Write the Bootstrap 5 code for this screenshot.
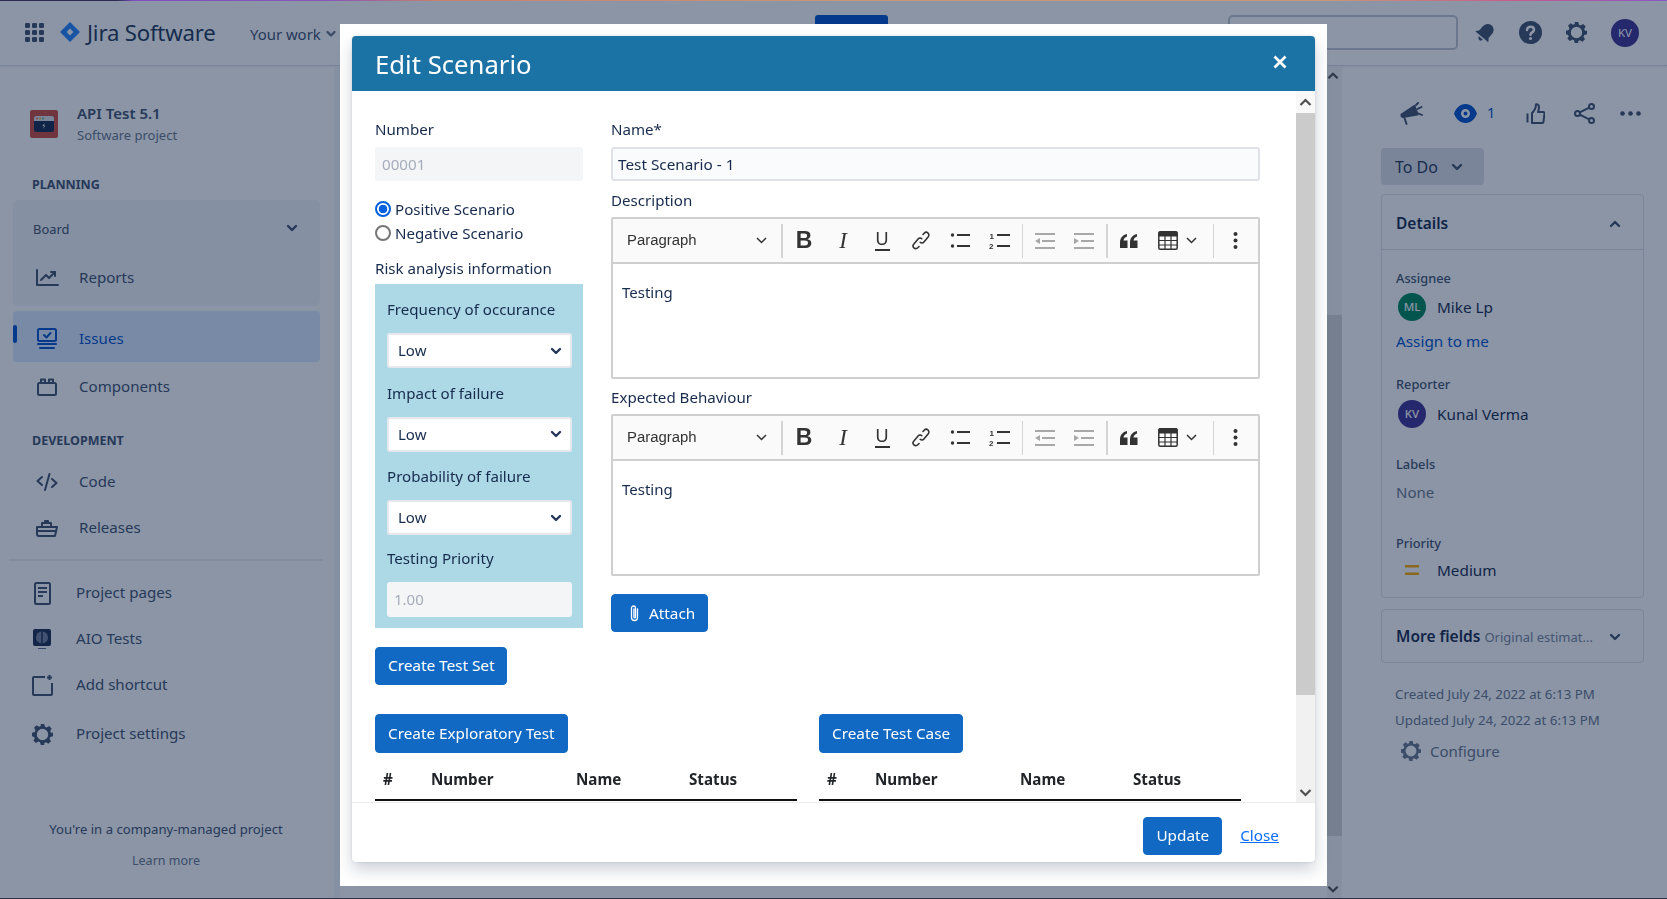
<!DOCTYPE html>
<html lang="en">
<head>
<meta charset="utf-8">
<title>Edit Scenario</title>
<link href="https://cdn.jsdelivr.net/npm/bootstrap@5.3.0/dist/css/bootstrap.min.css" rel="stylesheet">
<style>
html,body{height:100%;overflow:hidden}
body{font-family:"Noto Sans","Open Sans",sans-serif;font-size:15px;color:#172b4d;background:#fff}
.top-grad{position:absolute;left:0;top:0;right:0;height:1px;z-index:1100;background:linear-gradient(90deg,#2a2a55 0,#2a2a55 7%,#7d4fc4 8%,#8a55b8 20%,#c77f6e 26%,#c99577 50%,#c99577 80%,#c55a8c 91%,#8a55c8 100%)}
.bot-line{position:absolute;left:0;right:0;bottom:0;height:1px;z-index:1100;background:#2d3340}
.app-nav{height:66px;flex:none;border-bottom:1px solid #d8dbe2;box-shadow:0 1px 2px rgba(9,30,66,.06)}
.app-nav>*{flex:none}
.brand-wrap{width:250px;padding-left:25px}
.brand-name{font-size:22.2px;color:#253858;margin-left:7px;letter-spacing:-.2px;font-weight:400}
.your-work{width:565px;color:#42526e;font-size:14.9px;margin-top:3px}
.create-stub{width:73px;height:32px;background:#0052cc;border-radius:3px;margin-top:-3px}
.search-stub{width:230px;height:35px;border:2px solid #c1c7d0;border-radius:5px;margin-left:340px;margin-top:-1px}
.nav-ico{flex:none;display:block}
.side{width:340px;flex:none;border-right:6px solid #f4f5f7;display:flex;flex-direction:column}
.proj-block{margin-top:36px;padding-left:30px;height:44px;gap:19px}
.proj-name{font-size:15px;font-weight:600;line-height:22px;color:#42526e}
.proj-sub{font-size:13px;line-height:22px;color:#6b778c}
.side-head{font-size:12.5px;font-weight:700;line-height:18px;padding-left:32px;color:#42526e}
.side-group{margin:6px 14px 0 13px;height:106px;background:#f4f5f7;border-radius:6px}
.board-row{height:55px;padding:5px 22px 0 20px;font-size:12.9px;color:#42526e}
.side-row{display:flex;align-items:center;height:46px;padding-left:22px;padding-bottom:2px;gap:20px;font-size:15.1px;color:#42526e;margin:0 14px 0 13px;position:relative}
.side-row.in-group{margin:0}
.side-row.lower{padding-left:17px;gap:22px}
.side-row .ico-box{width:24px;display:flex;justify-content:center;flex:none;margin-top:2px}
.issues-on{height:51px;background:#deebff;color:#0052cc;border-radius:4px;margin-top:5px;padding-bottom:0;padding-top:3px}
.issues-on .ico-box{margin-top:0}
.issues-bar{position:absolute;left:0;top:14px;width:4px;height:18px;background:#0052cc;border-radius:2px}
.side-rule{height:2px;background:#ebecf0;margin:8px 11px 0 9px}
.side-foot{text-align:center;font-size:13.15px;line-height:22px;color:#42526e;width:332px;margin-top:61px}
.side-foot2{text-align:center;font-size:12.5px;line-height:20px;color:#6b778c;width:332px;margin-top:11px}
.mid{flex:1 1 auto}
.page-bar{width:15px;flex:none;display:flex;flex-direction:column;background:#f3f3f3}
.page-thumb{height:521px;background:#d5d5d5;margin-top:249px}
.page-arrow{height:19px;display:flex;align-items:center;justify-content:center;padding-right:3px}
.page-arrow.bt{margin-top:auto;margin-bottom:1px}
.rail{width:325px;flex:none;padding-left:39px;color:#42526e}
.rail-icons{height:46px;margin-top:24px;padding-left:19px}
.status-btn{width:103px;height:37px;margin-top:12px;background:#dfe1e6;color:#253858;border-radius:4px;font-size:16px;padding-left:14px;gap:13px}
.det-card{width:263px;margin-top:9px;height:404px;border:1px solid #dfe1e6;border-radius:4px;--bs-card-bg:transparent}
.det-head{height:55px;padding:3px 22px 0 14px;border-bottom:1px solid #dfe1e6;font-size:15.5px;font-weight:600;color:#172b4d}
.det-body{padding:0 14px;flex:none}
.fld{font-size:12.8px;line-height:18px;color:#42526e;font-weight:500}
.val-row{height:28px;gap:11px;padding-left:2px;font-size:15.3px;color:#172b4d}
.avt{width:28px;height:28px;border-radius:50%;color:#fff;font-size:11.5px;font-weight:500;display:flex;align-items:center;justify-content:center;flex:none}
.avt-g{background:#00875a}.avt-p{background:#403294}
.more-card{width:263px;height:54px;margin-top:11px;border:1px solid #dfe1e6;border-radius:4px;padding:2px 22px 0 14px}
.more-t{font-size:15.5px;font-weight:600;color:#172b4d;white-space:nowrap}
.more-s{font-size:13px;color:#7a869a;margin-left:4px;white-space:nowrap}
.stamp{font-size:13.3px;line-height:22px;color:#6b778c;padding-left:14px}
.conf-row{height:28px;margin-top:6px;padding-left:20px;gap:9px;font-size:15px;color:#6b778c}
.veil{position:fixed;inset:0;background:rgba(9,30,66,.47);z-index:1050}
.edit-dialog{max-width:none;width:987px;height:862px;margin:24px 0 0 340px;background:#fff;padding:12px}
.edit-box{height:826px;width:963px;border:0;border-radius:4px;box-shadow:0 8px 16px rgba(9,30,66,.2),0 0 3px rgba(9,30,66,.12);display:flex;flex-direction:column}
.edit-head{height:55px;flex:none;background:#1b72a5;color:#fff;padding:4px 20px 0 23px;border:0;border-radius:4px 4px 0 0}
.edit-title{font-size:25.7px;font-weight:400;margin:0;line-height:1.2}
.edit-x{opacity:1;width:14px;height:14px;padding:0;margin:-7px 0 0 0 !important;background:url("data:image/svg+xml,%3csvg xmlns='http://www.w3.org/2000/svg' viewBox='0 0 14 14'%3e%3cpath fill='none' stroke='%23fff' stroke-width='2.800' d='M1.500 1.500l11 11M12.500 1.500l-11 11'/%3e%3c/svg%3e") center/14px no-repeat}
.edit-body{flex:1 1 auto;padding:0;display:flex;min-height:0;overflow:hidden}
.scroll-pane{flex:1 1 auto;min-width:0;overflow:hidden;padding:27px 0 0 23px}
.fake-bar{width:19px;flex:none;background:#f1f1f1;display:flex;flex-direction:column}
.fake-arrow{height:22px;flex:none;display:flex;align-items:center;justify-content:center;background:#f8f8f8}
.fake-arrow.dn{margin-top:auto;background:#f1f1f1;height:20px}
.fake-thumb{height:582px;background:#cbcbcb;flex:none}
.col-left{width:208px;flex:none}
.col-right{width:649px;flex:none}
.lbl{display:block;line-height:22px;font-size:15.1px;color:#172b4d;margin:0}
.in-muted,.in-muted:disabled{height:34px;background:#f4f5f7;border:0;border-radius:3px;color:#a5adba;font-size:15.2px;padding:0 7px;margin-top:7px;opacity:1}
.in-name{height:34px;background:#fafbfc;border:2px solid #dfe1e6;border-radius:3px;color:#172b4d;font-size:15.3px;padding:0 5px;margin-top:7px}
.radio-row{height:24px;gap:4px;font-size:15.1px;color:#172b4d}
.radio-row input{appearance:none;width:16px;height:16px;margin:0;border:2px solid #767676;border-radius:50%;background:#fff;flex:none}
.radio-row input:checked{border-color:#0060df;background:radial-gradient(circle,#0060df 0 4px,#fff 4.6px)}
.risk-box{background:#add8e6;padding:14px 11px 11px 12px;margin-top:4px}
.risk-lbl{line-height:22px;font-size:15.1px;color:#172b4d;margin-bottom:13px;display:block}
.risk-sel{height:35px;border:2px solid #e6e8ec;border-radius:3px;font-size:15px;color:#172b4d;padding:0 0 0 9px;margin-bottom:13.5px;background-size:14px;background-position:right 7px center;--bs-form-select-bg-img:none;background-image:url("data:image/svg+xml,%3csvg xmlns='http://www.w3.org/2000/svg' viewBox='0 0 14 14'%3e%3cpath fill='none' stroke='%23253858' stroke-width='2.4' stroke-linecap='round' stroke-linejoin='round' d='M3 5l4 4 4-4'/%3e%3c/svg%3e")}
.risk-in,.risk-in:disabled{height:35px;background:#f4f5f7;border:0;border-radius:3px;color:#a5adba;font-size:15px;padding:0 7px;opacity:1}
.act-btn{--bs-btn-bg:#1169c4;--bs-btn-border-color:#1169c4;--bs-btn-color:#fff;--bs-btn-padding-x:12px;--bs-btn-padding-y:0;--bs-btn-font-size:15.3px;--bs-btn-border-radius:4px;height:38px;display:inline-flex;align-items:center}
.editor-box{height:162px;margin-top:6px;border:2px solid #cfcfcf;border-radius:2px;background:#fff;overflow:hidden}
.ck-bar{height:45px;background:#fafafa;border-bottom:2px solid #cfcfcf;margin:0}
.ck-para{width:168px;padding:0 14px;font-family:"Liberation Sans",sans-serif;font-size:14.9px;color:#333;flex:none}
.ck-sep{width:1.5px;height:34px;background:#d4d4d4;flex:none}
.ck-b{width:39px;height:34px;display:flex;align-items:center;justify-content:center;flex:none;color:#333}
.ck-gap{margin-left:2px}
.ck-sep.g{margin-left:3px}
.ck-bold{font:700 23px/1 "Liberation Sans",sans-serif}
.ck-ital{font:italic 400 23px/1 "Liberation Serif",serif}
.ck-und{font:400 18px/1 "Liberation Sans",sans-serif;border-bottom:2px solid #333;padding:0 1px 1px}
.ck-tbl{width:58px;gap:8px;justify-content:flex-start;padding-left:7px}
.ck-text{padding:17px 9px;font-size:15px;line-height:22px;color:#172b4d}
.tbl-col{width:422px;flex:none}
.mini-tbl{margin:0;table-layout:fixed;width:422px;--bs-table-border-color:#000}
.mini-tbl th{height:47px;padding:7px 0 0 8px;font-size:15.2px;font-weight:700;color:#212529;border-bottom:2px solid #111;vertical-align:middle}
.edit-foot{height:60px;flex:none;padding:6px 36px 0 0;border-top:1px solid #e9ecef;gap:18px;justify-content:flex-end;align-items:center;display:flex;margin:0}
.edit-foot>*{margin:0}
.close-link{color:#0d6efd;font-size:15.3px}
</style>
</head>
<body>
<div class="top-grad"></div>
<div class="d-flex flex-column vh-100">
  <nav class="app-nav d-flex align-items-center">
    <div class="brand-wrap d-flex align-items-center">
      <svg class="nav-ico" width="19" height="19" viewBox="0 0 19 19" fill="#42526e"><rect width="5" height="5" rx="1.2"/><rect x="7" width="5" height="5" rx="1.2"/><rect x="14" width="5" height="5" rx="1.2"/><rect y="7" width="5" height="5" rx="1.2"/><rect x="7" y="7" width="5" height="5" rx="1.2"/><rect x="14" y="7" width="5" height="5" rx="1.2"/><rect y="14" width="5" height="5" rx="1.2"/><rect x="7" y="14" width="5" height="5" rx="1.2"/><rect x="14" y="14" width="5" height="5" rx="1.2"/></svg>
      <svg class="nav-ico ms-3" width="20" height="20" viewBox="0 0 20 20"><path fill="#2684ff" d="M10 0l10 10-10 10L0 10z"/><path fill="#fff" d="M10 6.600l3.400 3.400-3.400 3.400L6.600 10z"/></svg>
      <span class="brand-name">Jira Software</span>
    </div>
    <div class="your-work d-flex align-items-center gap-1">Your work
      <svg width="12" height="12" viewBox="0 0 12 12"><path fill="none" stroke="#6b778c" stroke-width="2.400" stroke-linecap="round" stroke-linejoin="round" d="M2.500 4l3.500 3.500L9.500 4"/></svg>
    </div>
    <div class="create-stub"></div>
    <div class="search-stub"></div>
    <svg class="nav-ico" style="margin-left:17px" width="20" height="20" viewBox="0 0 20 20" fill="#42526e"><g transform="rotate(40 10 10)"><path d="M10 0C6 0 4 3 4 7v4.500L1.500 15h17L16 11.500V7c0-4-2-7-6-7z"/><path d="M7.500 16.500h5a2.500 2.500 0 0 1-5 0z"/></g></svg>
    <svg class="nav-ico" style="margin-left:24px" width="23" height="23" viewBox="0 0 23 23"><circle cx="11.500" cy="11.500" r="11.500" fill="#42526e"/><path fill="none" stroke="#fff" stroke-width="2.600" stroke-linecap="round" d="M8 9c0-2 1.600-3.300 3.600-3.300s3.400 1.200 3.400 3c0 2.800-3.500 2.500-3.500 5"/><circle cx="11.500" cy="17.500" r="1.600" fill="#fff"/></svg>
    <svg class="nav-ico" style="margin-left:24px" width="21" height="21" viewBox="0 0 24 24"><path fill="#42526e" fill-rule="evenodd" d="M10 0h4l.8 3.200 2 .8 2.800-1.700 2.900 2.900-1.700 2.800.8 2L24 10v4l-3.200.8-.8 2 1.700 2.800-2.900 2.900-2.800-1.700-2 .8L14 24h-4l-.8-3.200-2-.8-2.800 1.700-2.900-2.900L3.200 16.800l-.8-2L0 14v-4l3.200-.8.800-2L2.300 4.400 5.200 1.500 8 3.200l2-.8zM12 5.500a6.500 6.500 0 1 0 0 13 6.500 6.500 0 0 0 0-13z"/></svg>
    <div class="avt avt-p" style="margin-left:24px;font-weight:400">KV</div>
  </nav>
  <div class="d-flex flex-grow-1" style="min-height:0">
    <aside class="side">
      <div class="proj-block d-flex align-items-center">
        <svg class="nav-ico" width="28" height="28" viewBox="0 0 28 28"><rect width="28" height="28" rx="2" fill="#cf4b3f"/><rect x="4" y="6" width="20" height="16" rx="2" fill="#172b4d"/><path d="M4 8a2 2 0 0 1 2-2h16a2 2 0 0 1 2 2v3H4z" fill="#dfe1e6"/><circle cx="7" cy="8.500" r=".9" fill="#ff5630"/><circle cx="10" cy="8.500" r=".9" fill="#ffab00"/><circle cx="13" cy="8.500" r=".9" fill="#36b37e"/><path d="M14.500 13l-2 3h1.500l-1 3 2.300-3.500H14z" fill="#fff"/></svg>
        <div><div class="proj-name">API Test 5.1</div><div class="proj-sub">Software project</div></div>
      </div>
      <div class="side-head" style="margin-top:30px">PLANNING</div>
      <div class="side-group">
        <div class="board-row d-flex align-items-center justify-content-between">Board
          <svg width="12" height="12" viewBox="0 0 12 12" style="margin-top:-5px"><path fill="none" stroke="#42526e" stroke-width="2.400" stroke-linecap="round" stroke-linejoin="round" d="M2 4l4 4 4-4"/></svg>
        </div>
        <div class="side-row in-group"><span class="ico-box"><svg width="24" height="18" viewBox="0 0 24 18" fill="none" stroke="#42526e" stroke-width="2" stroke-linecap="round" stroke-linejoin="round"><path d="M2 1v15h21"/><path d="M6 11l5-5 3 3 6-6"/><path d="M16 3h4v4"/></svg></span>Reports</div>
      </div>
      <div class="side-row issues-on"><span class="issues-bar"></span><span class="ico-box"><svg width="22" height="21" viewBox="0 0 22 21" fill="none" stroke="#0052cc" stroke-width="2" stroke-linecap="round" stroke-linejoin="round"><rect x="2" y="1" width="18" height="12" rx="1.500"/><path d="M8 7l2.500 2.500L14.500 5"/><path d="M2 16h18M4 20h14"/></svg></span>Issues</div>
      <div class="side-row" style="margin-top:2px"><span class="ico-box"><svg width="22" height="18" viewBox="0 0 22 18" fill="none" stroke="#42526e" stroke-width="2" stroke-linejoin="round"><rect x="2" y="5" width="18" height="12" rx="1.500"/><path d="M5 5V1.500h4V5M13 5V1.500h4V5"/></svg></span>Components</div>
      <div class="side-head" style="margin-top:22px">DEVELOPMENT</div>
      <div class="side-row" style="margin-top:9px"><span class="ico-box"><svg width="22" height="18" viewBox="0 0 22 18" fill="none" stroke="#42526e" stroke-width="2" stroke-linecap="round" stroke-linejoin="round"><path d="M6 4L1.500 8 6 12M16 6l4.500 4L16 14M13.500 1L9 17"/></svg></span>Code</div>
      <div class="side-row"><span class="ico-box"><svg width="24" height="17" viewBox="0 0 24 17" fill="none" stroke="#42526e" stroke-width="2" stroke-linejoin="round"><path d="M7 7V3h9v4M10 3V1h3v2"/><path d="M2 7h20l-2 9H4a2 2 0 0 1-2-2zM2 11h20"/></svg></span>Releases</div>
      <div class="side-rule"></div>
      <div class="side-row lower" style="margin-top:9px"><span class="ico-box"><svg width="17" height="23" viewBox="0 0 17 23" fill="none" stroke="#42526e" stroke-width="2"><rect x="1" y="1" width="15" height="21" rx="1.500"/><path d="M4 6h9M4 10h9M4 14h5"/></svg></span>Project pages</div>
      <div class="side-row lower"><span class="ico-box"><svg width="20" height="22" viewBox="0 0 20 22"><rect x="1" y="1" width="18" height="17" rx="2" fill="#1d2d4f"/><ellipse cx="10" cy="9.500" rx="6" ry="6" fill="#75839c"/><path d="M10 3.500v12" stroke="#1d2d4f" stroke-width="1.500"/><rect x="6" y="20" width="8" height="1" fill="#5a6a8a"/></svg></span>AIO Tests</div>
      <div class="side-row lower"><span class="ico-box"><svg width="21" height="22" viewBox="0 0 21 22" fill="none" stroke="#42526e" stroke-width="2" stroke-linejoin="round"><path d="M13 3H2a1 1 0 0 0-1 1v16a1 1 0 0 0 1 1h17a1 1 0 0 0 1-1V9"/><path d="M17.500 1v5M15 3.500h5"/></svg></span>Add shortcut</div>
      <div class="side-row lower" style="margin-top:3px"><span class="ico-box"><svg width="21" height="21" viewBox="0 0 24 24"><path fill="#42526e" fill-rule="evenodd" d="M10 0h4l.8 3.200 2 .8 2.800-1.700 2.900 2.900-1.700 2.800.8 2L24 10v4l-3.200.8-.8 2 1.700 2.800-2.900 2.900-2.800-1.700-2 .8L14 24h-4l-.8-3.200-2-.8-2.800 1.700-2.900-2.900L3.200 16.800l-.8-2L0 14v-4l3.200-.8.800-2L2.300 4.400 5.200 1.500 8 3.200l2-.8zM12 5.500a6.500 6.500 0 1 0 0 13 6.500 6.500 0 0 0 0-13z"/></svg></span>Project settings</div>
      <div class="side-foot">You're in a company-managed project</div>
      <div class="side-foot2">Learn more</div>
    </aside>
    <div class="mid"></div>
    <div class="page-bar">
      <div class="page-arrow" style="margin-bottom:-19px"><svg width="13" height="10" viewBox="0 0 13 10"><path fill="none" stroke="#505050" stroke-width="2.400" d="M1.500 7.500L6.500 2.500l5 5"/></svg></div>
      <div class="page-thumb"></div>
      <div class="page-arrow bt"><svg width="13" height="10" viewBox="0 0 13 10"><path fill="none" stroke="#505050" stroke-width="2.400" d="M1.500 2.500L6.500 7.500l5-5"/></svg></div>
    </div>
    <aside class="rail">
      <div class="rail-icons d-flex align-items-center">
        <svg width="23" height="23" viewBox="0 0 23 23"><path fill="#42526e" d="M.5 12L14 3q1-.5 1.500 1L18.500 12q.5 1.500-1 1.500L3 16q-2 0-2.500-2z"/><path fill="none" stroke="#42526e" stroke-width="1.900" stroke-linecap="round" d="M4.500 16l2 6M16 3l2-2M17.500 7l4-2M18.500 11.500l3.500 1.500"/></svg>
        <svg style="margin-left:31px" width="23" height="19" viewBox="0 0 23 19"><path fill="#0052cc" fill-rule="evenodd" d="M11.500 0C17 0 21 4 23 9.500 21 15 17 19 11.500 19S2 15 0 9.500C2 4 6 0 11.500 0zm0 5a4.500 4.500 0 1 0 0 9 4.500 4.500 0 0 0 0-9zm0 2.500a2 2 0 1 1 0 4 2 2 0 0 1 0-4z"/></svg>
        <span style="margin-left:10px;width:39px;color:#0052cc;font-size:14.500px">1</span>
        <svg width="19" height="21" viewBox="0 0 19 21" fill="none" stroke="#42526e" stroke-width="2" stroke-linejoin="round"><path d="M6 19.500V10c2-2 4-4.500 4-8.500 0-.5 3-.5 3 2.500 0 2-.5 3.500-1 5h5a1.500 1.500 0 0 1 1.500 1.500l-1 8a1.500 1.500 0 0 1-1.500 1.500H6z"/><path d="M1.500 10.500v9"/></svg>
        <svg style="margin-left:29px" width="21" height="21" viewBox="0 0 21 21" fill="none" stroke="#42526e" stroke-width="2"><circle cx="3.500" cy="10.500" r="2.500"/><circle cx="17.500" cy="3.500" r="2.500"/><circle cx="17.500" cy="17.500" r="2.500"/><path d="M5.800 9.300l9.400-4.700M5.800 11.700l9.400 4.700"/></svg>
        <svg style="margin-left:25px" width="21" height="5" viewBox="0 0 21 5" fill="#42526e"><circle cx="2.500" cy="2.500" r="2.300"/><circle cx="10.500" cy="2.500" r="2.300"/><circle cx="18.500" cy="2.500" r="2.300"/></svg>
      </div>
      <div class="status-btn d-flex align-items-center">To Do
        <svg width="12" height="12" viewBox="0 0 12 12"><path fill="none" stroke="#42526e" stroke-width="2.400" stroke-linecap="round" stroke-linejoin="round" d="M2 4l4 4 4-4"/></svg>
      </div>
      <div class="card det-card">
        <div class="det-head d-flex align-items-center justify-content-between">Details
          <svg width="12" height="12" viewBox="0 0 12 12"><path fill="none" stroke="#42526e" stroke-width="2.400" stroke-linecap="round" stroke-linejoin="round" d="M2 8l4-4 4 4"/></svg>
        </div>
        <div class="det-body">
          <div class="fld" style="margin-top:19px">Assignee</div>
          <div class="val-row d-flex align-items-center" style="margin-top:6px"><span class="avt avt-g">ML</span>Mike Lp</div>
          <div style="margin-top:9px;line-height:22px;color:#0052cc;font-size:15.300px">Assign to me</div>
          <div class="fld" style="margin-top:23px">Reporter</div>
          <div class="val-row d-flex align-items-center" style="margin-top:7px"><span class="avt avt-p">KV</span>Kunal Verma</div>
          <div class="fld" style="margin-top:27px">Labels</div>
          <div style="margin-top:8px;line-height:22px;color:#6b778c;font-size:15px">None</div>
          <div class="fld" style="margin-top:31px">Priority</div>
          <div class="val-row d-flex align-items-center" style="margin-top:4px"><span style="width:28px;display:flex;justify-content:center"><svg width="14" height="10" viewBox="0 0 14 10" fill="#ffab00"><rect width="14" height="2.500"/><rect y="7.500" width="14" height="2.500"/></svg></span>Medium</div>
        </div>
      </div>
      <div class="more-card d-flex align-items-center justify-content-between">
        <div><span class="more-t">More fields</span><span class="more-s">Original estimat...</span></div>
        <svg width="12" height="12" viewBox="0 0 12 12" class="flex-none"><path fill="none" stroke="#42526e" stroke-width="2.400" stroke-linecap="round" stroke-linejoin="round" d="M2 4l4 4 4-4"/></svg>
      </div>
      <div class="stamp" style="margin-top:20px">Created July 24, 2022 at 6:13 PM</div>
      <div class="stamp" style="margin-top:4px">Updated July 24, 2022 at 6:13 PM</div>
      <div class="conf-row d-flex align-items-center"><svg width="20" height="20" viewBox="0 0 24 24"><path fill="#6b778c" fill-rule="evenodd" d="M10 0h4l.8 3.200 2 .8 2.800-1.700 2.900 2.900-1.700 2.800.8 2L24 10v4l-3.200.8-.8 2 1.700 2.800-2.900 2.900-2.800-1.700-2 .8L14 24h-4l-.8-3.200-2-.8-2.800 1.700-2.900-2.900L3.200 16.800l-.8-2L0 14v-4l3.200-.8.800-2L2.300 4.400 5.200 1.500 8 3.200l2-.8zM12 5.500a6.500 6.500 0 1 0 0 13 6.500 6.500 0 0 0 0-13z"/></svg>Configure</div>
    </aside>
  </div>
</div>
<div class="veil"></div>
<div class="modal d-block" tabindex="-1">
  <div class="modal-dialog edit-dialog">
    <div class="modal-content edit-box">
      <div class="modal-header edit-head">
        <h5 class="modal-title edit-title">Edit Scenario</h5>
        <button type="button" class="btn-close edit-x" aria-label="Close"></button>
      </div>
      <div class="modal-body edit-body">
        <div class="scroll-pane">
          <div class="d-flex" style="gap:27px">
            <div class="col-left">
              <label class="lbl">Number</label>
              <input class="form-control in-muted" value="00001" disabled>
              <div class="form-check radio-row d-flex align-items-center p-0 m-0" style="margin-top:16px !important"><input type="radio" name="kind" checked>Positive Scenario</div>
              <div class="form-check radio-row d-flex align-items-center p-0 m-0"><input type="radio" name="kind">Negative Scenario</div>
              <label class="lbl" style="margin-top:12px">Risk analysis information</label>
              <div class="risk-box" style="margin-top:5px">
                <label class="risk-lbl">Frequency of occurance</label>
                <select class="form-select risk-sel"><option>Low</option></select>
                <label class="risk-lbl">Impact of failure</label>
                <select class="form-select risk-sel"><option>Low</option></select>
                <label class="risk-lbl">Probability of failure</label>
                <select class="form-select risk-sel"><option>Low</option></select>
                <label class="risk-lbl" style="margin-top:-1.500px;margin-bottom:12.500px">Testing Priority</label>
                <input class="form-control risk-in" value="1.00" disabled>
              </div>
              <button class="btn act-btn" style="margin-top:19px">Create Test Set</button>
            </div>
            <div class="col-right" style="margin-left:1px">
              <label class="lbl">Name*</label>
              <input class="form-control in-name" value="Test Scenario - 1">
              <label class="lbl" style="margin-top:8px">Description</label>
              <div class="editor-box">
                <div class="ck-bar d-flex align-items-center">
                  <div class="ck-para d-flex align-items-center justify-content-between">Paragraph
                    <svg width="11" height="7" viewBox="0 0 11 7"><path fill="none" stroke="#333" stroke-width="1.500" d="M1 1l4.500 4.500L10 1"/></svg>
                  </div>
                  <span class="ck-sep"></span>
                  <span class="ck-b ck-gap"><span class="ck-bold">B</span></span>
                  <span class="ck-b"><span class="ck-ital">I</span></span>
                  <span class="ck-b"><span class="ck-und">U</span></span>
                  <span class="ck-b"><svg width="18" height="19" viewBox="0 0 18 19" fill="none" stroke="#333" stroke-width="1.600" stroke-linecap="round"><path d="M7 15.500l-1.200 1.300a2.700 2.700 0 0 1-3.900-3.800l4.200-5c1-1.200 2.700-1.300 3.700-.3"/><path d="M11 3.500l1.200-1.300a2.700 2.700 0 0 1 3.900 3.800l-4.200 5c-1 1.200-2.700 1.300-3.700.3"/></svg></span>
                  <span class="ck-b"><svg width="20" height="17" viewBox="0 0 20 17"><circle cx="2.500" cy="3" r="1.700" fill="#333"/><circle cx="2.500" cy="14" r="1.700" fill="#333"/><rect x="7" y="2" width="13" height="2" fill="#333"/><rect x="7" y="13" width="13" height="2" fill="#333"/></svg></span>
                  <span class="ck-b"><svg width="21" height="17" viewBox="0 0 21 17"><text x="0.500" y="7" font-size="8" font-weight="700" font-family="Liberation Sans" fill="#333">1</text><text x="0" y="16.500" font-size="8" font-weight="700" font-family="Liberation Sans" fill="#333">2</text><rect x="8" y="2" width="13" height="2" fill="#333"/><rect x="8" y="13" width="13" height="2" fill="#333"/></svg></span>
                  <span class="ck-sep g"></span>
                  <span class="ck-b ck-gap"><svg width="20" height="16" viewBox="0 0 20 16" fill="#a8a8a8"><rect width="20" height="2"/><rect x="7" y="7" width="13" height="2"/><rect y="14" width="20" height="2"/><path d="M5 5v6L0 8z"/></svg></span>
                  <span class="ck-b"><svg width="20" height="16" viewBox="0 0 20 16" fill="#a8a8a8"><rect width="20" height="2"/><rect x="7" y="7" width="13" height="2"/><rect y="14" width="20" height="2"/><path d="M0 5v6l5-3z"/></svg></span>
                  <span class="ck-sep g"></span>
                  <span class="ck-b ck-gap"><svg width="18" height="14" viewBox="0 0 18 14" fill="#333"><path d="M0 14V8.500C0 4 2.500 1 7 0v2.500C5 3.300 3.800 4.500 3.500 6.500H7.500V14zM10 14V8.500C10 4 12.500 1 17 0v2.500c-2 .8-3.200 2-3.500 4H17.500V14z"/></svg></span>
                  <span class="ck-b ck-gap ck-tbl"><svg width="20" height="19" viewBox="0 0 20 19" fill="none" stroke="#333"><rect x=".8" y=".8" width="18.400" height="17.400" rx="1.500" stroke-width="1.500"/><path d="M1 1h18v4H1z" fill="#333"/><path d="M1 9.500h18M1 14h18M7 5v13M13 5v13" stroke-width="1.200"/></svg><svg width="11" height="7" viewBox="0 0 11 7"><path fill="none" stroke="#333" stroke-width="1.500" d="M1 1l4.500 4.500L10 1"/></svg></span>
                  <span class="ck-sep" style="margin-left:4px"></span>
                  <span class="ck-b ck-gap"><svg width="5" height="17" viewBox="0 0 5 17" fill="#333"><circle cx="2.500" cy="2" r="2"/><circle cx="2.500" cy="8.500" r="2"/><circle cx="2.500" cy="15" r="2"/></svg></span>
                </div>
                <div class="ck-text">Testing</div>
              </div>
              <label class="lbl" style="margin-top:7px">Expected Behaviour</label>
              <div class="editor-box">
                <div class="ck-bar d-flex align-items-center">
                  <div class="ck-para d-flex align-items-center justify-content-between">Paragraph
                    <svg width="11" height="7" viewBox="0 0 11 7"><path fill="none" stroke="#333" stroke-width="1.500" d="M1 1l4.500 4.500L10 1"/></svg>
                  </div>
                  <span class="ck-sep"></span>
                  <span class="ck-b ck-gap"><span class="ck-bold">B</span></span>
                  <span class="ck-b"><span class="ck-ital">I</span></span>
                  <span class="ck-b"><span class="ck-und">U</span></span>
                  <span class="ck-b"><svg width="18" height="19" viewBox="0 0 18 19" fill="none" stroke="#333" stroke-width="1.600" stroke-linecap="round"><path d="M7 15.500l-1.200 1.300a2.700 2.700 0 0 1-3.900-3.800l4.200-5c1-1.200 2.700-1.300 3.700-.3"/><path d="M11 3.500l1.200-1.300a2.700 2.700 0 0 1 3.900 3.800l-4.200 5c-1 1.200-2.700 1.300-3.700.3"/></svg></span>
                  <span class="ck-b"><svg width="20" height="17" viewBox="0 0 20 17"><circle cx="2.500" cy="3" r="1.700" fill="#333"/><circle cx="2.500" cy="14" r="1.700" fill="#333"/><rect x="7" y="2" width="13" height="2" fill="#333"/><rect x="7" y="13" width="13" height="2" fill="#333"/></svg></span>
                  <span class="ck-b"><svg width="21" height="17" viewBox="0 0 21 17"><text x="0.500" y="7" font-size="8" font-weight="700" font-family="Liberation Sans" fill="#333">1</text><text x="0" y="16.500" font-size="8" font-weight="700" font-family="Liberation Sans" fill="#333">2</text><rect x="8" y="2" width="13" height="2" fill="#333"/><rect x="8" y="13" width="13" height="2" fill="#333"/></svg></span>
                  <span class="ck-sep g"></span>
                  <span class="ck-b ck-gap"><svg width="20" height="16" viewBox="0 0 20 16" fill="#a8a8a8"><rect width="20" height="2"/><rect x="7" y="7" width="13" height="2"/><rect y="14" width="20" height="2"/><path d="M5 5v6L0 8z"/></svg></span>
                  <span class="ck-b"><svg width="20" height="16" viewBox="0 0 20 16" fill="#a8a8a8"><rect width="20" height="2"/><rect x="7" y="7" width="13" height="2"/><rect y="14" width="20" height="2"/><path d="M0 5v6l5-3z"/></svg></span>
                  <span class="ck-sep g"></span>
                  <span class="ck-b ck-gap"><svg width="18" height="14" viewBox="0 0 18 14" fill="#333"><path d="M0 14V8.500C0 4 2.500 1 7 0v2.500C5 3.300 3.800 4.500 3.500 6.500H7.500V14zM10 14V8.500C10 4 12.500 1 17 0v2.500c-2 .8-3.200 2-3.500 4H17.500V14z"/></svg></span>
                  <span class="ck-b ck-gap ck-tbl"><svg width="20" height="19" viewBox="0 0 20 19" fill="none" stroke="#333"><rect x=".8" y=".8" width="18.400" height="17.400" rx="1.500" stroke-width="1.500"/><path d="M1 1h18v4H1z" fill="#333"/><path d="M1 9.500h18M1 14h18M7 5v13M13 5v13" stroke-width="1.200"/></svg><svg width="11" height="7" viewBox="0 0 11 7"><path fill="none" stroke="#333" stroke-width="1.500" d="M1 1l4.500 4.500L10 1"/></svg></span>
                  <span class="ck-sep" style="margin-left:4px"></span>
                  <span class="ck-b ck-gap"><svg width="5" height="17" viewBox="0 0 5 17" fill="#333"><circle cx="2.500" cy="2" r="2"/><circle cx="2.500" cy="8.500" r="2"/><circle cx="2.500" cy="15" r="2"/></svg></span>
                </div>
                <div class="ck-text">Testing</div>
              </div>
              <button class="btn act-btn" style="margin-top:18px;gap:8px;padding-left:16px"><svg width="13" height="18" viewBox="0 0 13 18" fill="none" stroke="#fff" stroke-width="1.300" stroke-linecap="round"><path d="M9.500 5v8.500a3 3 0 0 1-6 0V4a2 2 0 0 1 4 0v9a.8.8 0 0 1-1.600 0V5"/></svg>Attach</button>
            </div>
          </div>
          <div class="d-flex" style="gap:22px;margin-top:29px">
            <div class="tbl-col">
              <button class="btn act-btn" style="height:39px">Create Exploratory Test</button>
              <table class="table mini-tbl"><thead><tr><th style="width:48px">#</th><th style="width:145px">Number</th><th style="width:113px">Name</th><th>Status</th></tr></thead></table>
            </div>
            <div class="tbl-col">
              <button class="btn act-btn" style="height:39px">Create Test Case</button>
              <table class="table mini-tbl"><thead><tr><th style="width:48px">#</th><th style="width:145px">Number</th><th style="width:113px">Name</th><th>Status</th></tr></thead></table>
            </div>
          </div>
        </div>
        <div class="fake-bar">
          <div class="fake-arrow"><svg width="13" height="9" viewBox="0 0 13 9"><path fill="none" stroke="#505050" stroke-width="2.200" d="M1.500 7L6.500 2l5 5"/></svg></div>
          <div class="fake-thumb"></div>
          <div class="fake-arrow dn"><svg width="13" height="9" viewBox="0 0 13 9"><path fill="none" stroke="#505050" stroke-width="2.200" d="M1.500 2L6.500 7l5-5"/></svg></div>
        </div>
      </div>
      <div class="modal-footer edit-foot">
        <button class="btn act-btn">Update</button>
        <a href="#" class="close-link">Close</a>
      </div>
    </div>
  </div>
</div>
<div class="bot-line"></div>
<script src="https://cdn.jsdelivr.net/npm/bootstrap@5.3.0/dist/js/bootstrap.bundle.min.js"></script>
</body>
</html>
